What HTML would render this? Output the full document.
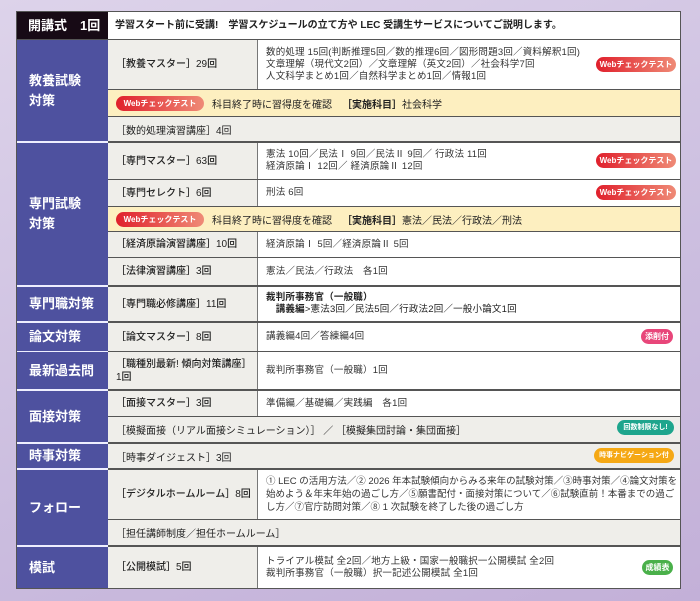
<!DOCTYPE html><html><head><meta charset="utf-8"><style>
*{margin:0;padding:0;box-sizing:border-box}
body{width:700px;height:601px;overflow:hidden;background:linear-gradient(160deg,#ddd3ea 0%,#cbbddf 60%,#c3b0d8 100%);font-family:"Liberation Sans","Noto Sans CJK JP",sans-serif;color:#222;position:relative}
.a{position:absolute}
.cat{position:absolute;left:17px;width:91px;background:#4e519f;color:#fff;font-weight:bold;font-size:13px;padding-left:12px;display:flex;align-items:center;line-height:20px}
.c{position:absolute;left:108px;width:150px;background:#efeeea;font-size:10px;padding-left:8px;display:flex;align-items:center;border-right:1px solid #777;line-height:13px;font-weight:500}
.d{position:absolute;left:258px;width:422px;background:#fff;font-size:9.5px;padding-left:8px;display:flex;align-items:center;line-height:12px;color:#333;letter-spacing:0.2px}
.w{position:absolute;left:108px;width:572px;font-size:10px;padding-left:8px;display:flex;align-items:center}
.y{background:#fdefc0}
.g{background:#efeeea}
.ln{position:absolute;left:108px;width:572px;height:1px;background:#555}
.wl{position:absolute;left:17px;width:91px;height:2px;background:#eef}
.b{position:absolute;font-size:8px;font-weight:bold;color:#fff;border-radius:8px;height:15px;line-height:15px;text-align:center;white-space:nowrap;letter-spacing:0}
.red{background:linear-gradient(90deg,#e0202c,#ef8a76)}
</style></head><body>
<div class="a" style="left:16px;top:11px;width:665px;height:578px;background:#555"></div>
<div class="a" style="left:17px;top:12px;width:91px;height:27px;background:#170a15;color:#fff;font-weight:bold;font-size:13px;padding-left:11px;line-height:27px">開講式　1回</div>
<div class="a" style="left:108px;top:12px;width:572px;height:27px;background:#fff;font-size:10px;font-weight:bold;padding-left:7px;line-height:27px">学習スタート前に受講!　学習スケジュールの立て方や LEC 受講生サービスについてご説明します。</div>

<div class="cat" style="top:40px;height:101px">教養試験<br>対策</div>
<div class="c" style="top:40px;height:49px">［教養マスター］29回</div>
<div class="d" style="top:40px;height:49px">数的処理 15回(判断推理5回／数的推理6回／図形問題3回／資料解釈1回)<br>文章理解（現代文2回）／文章理解（英文2回）／社会科学7回<br>人文科学まとめ1回／自然科学まとめ1回／情報1回</div>
<div class="b red" style="left:596px;top:57px;width:80px">Webチェックテスト</div>
<div class="w y" style="top:90px;height:26px"><span class="b red" style="position:static;display:inline-block;width:88px;margin-right:8px">Webチェックテスト</span>科目終了時に習得度を確認　<b>［実施科目］</b>社会科学</div>
<div class="w g" style="top:117px;height:24px">［数的処理演習講座］4回</div>
<div class="ln" style="top:89px"></div><div class="ln" style="top:116px"></div>

<div class="wl" style="top:141px"></div>
<div class="cat" style="top:143px;height:142px">専門試験<br>対策</div>
<div class="c" style="top:143px;height:36px">［専門マスター］63回</div>
<div class="d" style="top:143px;height:36px">憲法 10回／民法Ⅰ 9回／民法Ⅱ 9回／ 行政法 11回<br>経済原論Ⅰ 12回／ 経済原論Ⅱ 12回</div>
<div class="b red" style="left:596px;top:153px;width:80px">Webチェックテスト</div>
<div class="c" style="top:180px;height:26px">［専門セレクト］6回</div>
<div class="d" style="top:180px;height:26px">刑法 6回</div>
<div class="b red" style="left:596px;top:185px;width:80px">Webチェックテスト</div>
<div class="w y" style="top:207px;height:24px"><span class="b red" style="position:static;display:inline-block;width:88px;margin-right:8px">Webチェックテスト</span>科目終了時に習得度を確認　<b>［実施科目］</b>憲法／民法／行政法／刑法</div>
<div class="c" style="top:232px;height:25px">［経済原論演習講座］10回</div>
<div class="d" style="top:232px;height:25px">経済原論Ⅰ 5回／経済原論Ⅱ 5回</div>
<div class="c" style="top:258px;height:27px">［法律演習講座］3回</div>
<div class="d" style="top:258px;height:27px">憲法／民法／行政法　各1回</div>
<div class="ln" style="top:179px"></div><div class="ln" style="top:206px"></div><div class="ln" style="top:231px"></div><div class="ln" style="top:257px"></div>

<div class="wl" style="top:285px"></div>
<div class="cat" style="top:287px;height:34px">専門職対策</div>
<div class="c" style="top:287px;height:34px">［専門職必修講座］11回</div>
<div class="d" style="top:287px;height:34px;color:#222"><span><b>裁判所事務官（一般職）</b><br>　<b>講義編</b>&gt;憲法3回／民法5回／行政法2回／一般小論文1回</span></div>
<div class="wl" style="top:321px"></div>
<div class="cat" style="top:323px;height:28px">論文対策</div>
<div class="c" style="top:323px;height:28px">［論文マスター］8回</div>
<div class="d" style="top:323px;height:28px">講義編4回／答練編4回</div>
<div class="b" style="left:641px;top:329px;width:32px;background:#e8467a">添削付</div>
<div class="ln" style="top:351px"></div>
<div class="wl" style="top:351px;height:1px"></div>
<div class="cat" style="top:352px;height:37px">最新過去問</div>
<div class="c" style="top:352px;height:37px">［職種別最新! 傾向対策講座］<br>1回</div>
<div class="d" style="top:352px;height:37px">裁判所事務官（一般職）1回</div>
<div class="wl" style="top:389px"></div>
<div class="cat" style="top:391px;height:51px">面接対策</div>
<div class="c" style="top:391px;height:25px">［面接マスター］3回</div>
<div class="d" style="top:391px;height:25px">準備編／基礎編／実践編　各1回</div>
<div class="w g" style="top:417px;height:25px">［模擬面接（リアル面接シミュレーション）］ ／ ［模擬集団討論・集団面接］</div>
<div class="b" style="left:617px;top:420px;width:57px;background:#1ea58d;font-size:7px">回数制限なし!</div>
<div class="ln" style="top:416px"></div>
<div class="wl" style="top:442px"></div>
<div class="cat" style="top:444px;height:24px">時事対策</div>
<div class="w g" style="top:444px;height:24px">［時事ダイジェスト］3回</div>
<div class="b" style="left:594px;top:448px;width:80px;background:#f5a814;font-size:7px">時事ナビゲーション付</div>
<div class="wl" style="top:468px"></div>
<div class="cat" style="top:470px;height:75px">フォロー</div>
<div class="c" style="top:470px;height:49px">［デジタルホームルーム］8回</div>
<div class="d" style="top:470px;height:49px;line-height:13px;letter-spacing:0">① LEC の活用方法／② 2026 年本試験傾向からみる来年の試験対策／③時事対策／④論文対策を始めよう＆年末年始の過ごし方／⑤願書配付・面接対策について／⑥試験直前！本番までの過ごし方／⑦官庁訪問対策／⑧ 1 次試験を終了した後の過ごし方</div>
<div class="w g" style="top:520px;height:25px">［担任講師制度／担任ホームルーム］</div>
<div class="ln" style="top:519px"></div>
<div class="wl" style="top:545px"></div>
<div class="cat" style="top:547px;height:41px">模試</div>
<div class="c" style="top:547px;height:41px">［公開模試］5回</div>
<div class="d" style="top:547px;height:41px">トライアル模試 全2回／地方上級・国家一般職択一公開模試 全2回<br>裁判所事務官（一般職）択一記述公開模試 全1回</div>
<div class="b" style="left:642px;top:560px;width:31px;background:#4ab04a">成績表</div>
</body></html>
